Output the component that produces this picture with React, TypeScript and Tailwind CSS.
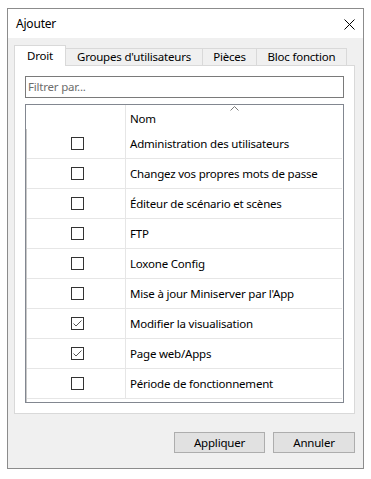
const rows = [
  { label: "Administration des utilisateurs", checked: false },
  { label: "Changez vos propres mots de passe", checked: false },
  { label: "Éditeur de scénario et scènes", checked: false },
  { label: "FTP", checked: false },
  { label: "Loxone Config", checked: false },
  { label: "Mise à jour Miniserver par l'App", checked: false },
  { label: "Modifier la visualisation", checked: true },
  { label: "Page web/Apps", checked: true },
  { label: "Période de fonctionnement", checked: false },
];

const Checkbox = ({ checked }: { checked: boolean }) => (
  <div className="flex h-[13px] w-[13px] items-center justify-center border border-[#333333] bg-white">
    {checked && (
      <svg width="11" height="11" viewBox="0 0 11 11" fill="none">
        <path d="M1.5 5.5 L4 8 L9.5 2.5" stroke="#555555" strokeWidth="1" />
      </svg>
    )}
  </div>
);

const App = () => {
  return (
    <div
      className="h-[479px] w-[371px] bg-white pl-[7px] pt-[8px] text-[11.5px] tracking-[-0.2px] text-black"
      style={{ fontFamily: '"Noto Sans", "Liberation Sans", sans-serif' }}
    >
      <div className="flex h-[461px] w-[357px] flex-col border border-[#8c8c8c] bg-[#f0f0f0]">
        {/* title bar */}
        <div className="flex h-[29px] items-center justify-between bg-white pl-[8px] pr-[8px]">
          <span className="text-[12px]">Ajouter</span>
          <svg width="11" height="11" viewBox="0 0 11 11" className="mt-[1px]">
            <path d="M0.5 0.5 L10.5 10.5 M10.5 0.5 L0.5 10.5" stroke="#000" strokeWidth="1" />
          </svg>
        </div>

        <div className="flex flex-1 flex-col pl-[6px] pr-[8px] pt-[7px]">
          {/* tabs */}
          <div className="relative z-10 -mb-px flex h-[21px] items-end">
            <div className="flex h-[21px] w-[52px] items-center justify-center border-l border-r border-t border-[#d9d9d9] bg-white pb-[1px]">
              Droit
            </div>
            <div className="flex h-[18px] w-[137px] items-center justify-center border-r border-t border-b border-[#d9d9d9] bg-[#f0f0f0]">
              Groupes d'utilisateurs
            </div>
            <div className="flex h-[18px] w-[54px] items-center justify-center border-r border-t border-b border-[#d9d9d9] bg-[#f0f0f0]">
              Pièces
            </div>
            <div className="flex h-[18px] w-[90px] items-center justify-center border-r border-t border-b border-[#d9d9d9] bg-[#f0f0f0]">
              Bloc fonction
            </div>
          </div>

          {/* panel */}
          <div className="flex h-[349px] w-[341px] flex-col border border-[#d9d9d9] bg-white px-[10px] pt-[10px]">
            <div className="flex h-[22px] w-[319px] items-center border border-[#7a7a7a] pl-[2px] text-[#6d6d6d]">
              Filtrer par...
            </div>

            <div className="mt-[6px] flex h-[299px] w-[319px] flex-col border border-[#828790]">
              <div className="relative flex h-[24px]">
                <div className="w-[100px] border-r border-[#e6e6e6]" />
                <div className="flex items-center pl-[4px] pt-[3px]">Nom</div>
                <svg
                  width="9"
                  height="5"
                  viewBox="0 0 9 5"
                  className="absolute left-[204px] top-[1px]"
                >
                  <path d="M0.5 4.5 L4.5 0.5 L8.5 4.5" stroke="#7a7a7a" strokeWidth="1" fill="none" />
                </svg>
              </div>
              <div className="flex flex-1 flex-col border-l border-[#c8c8c8]">
                {rows.map((r) => (
                  <div
                    key={r.label}
                    className="mr-[1px] flex h-[30px] border-b border-[#e6e6e6]"
                  >
                    <div className="flex w-[99px] items-center justify-center border-r border-[#e6e6e6] pl-[2px]">
                      <Checkbox checked={r.checked} />
                    </div>
                    <div className="flex items-center pl-[4px]">{r.label}</div>
                  </div>
                ))}
              </div>
            </div>
          </div>

          {/* buttons */}
          <div className="mt-[18px] flex justify-end gap-[8px]">
            <button
              type="button"
              className="flex h-[21px] w-[91px] items-center justify-center border border-[#adadad] bg-[#e1e1e1]"
            >
              Appliquer
            </button>
            <button
              type="button"
              className="flex h-[21px] w-[82px] items-center justify-center border border-[#adadad] bg-[#e1e1e1]"
            >
              Annuler
            </button>
          </div>
        </div>
      </div>
    </div>
  );
};

export default App;
